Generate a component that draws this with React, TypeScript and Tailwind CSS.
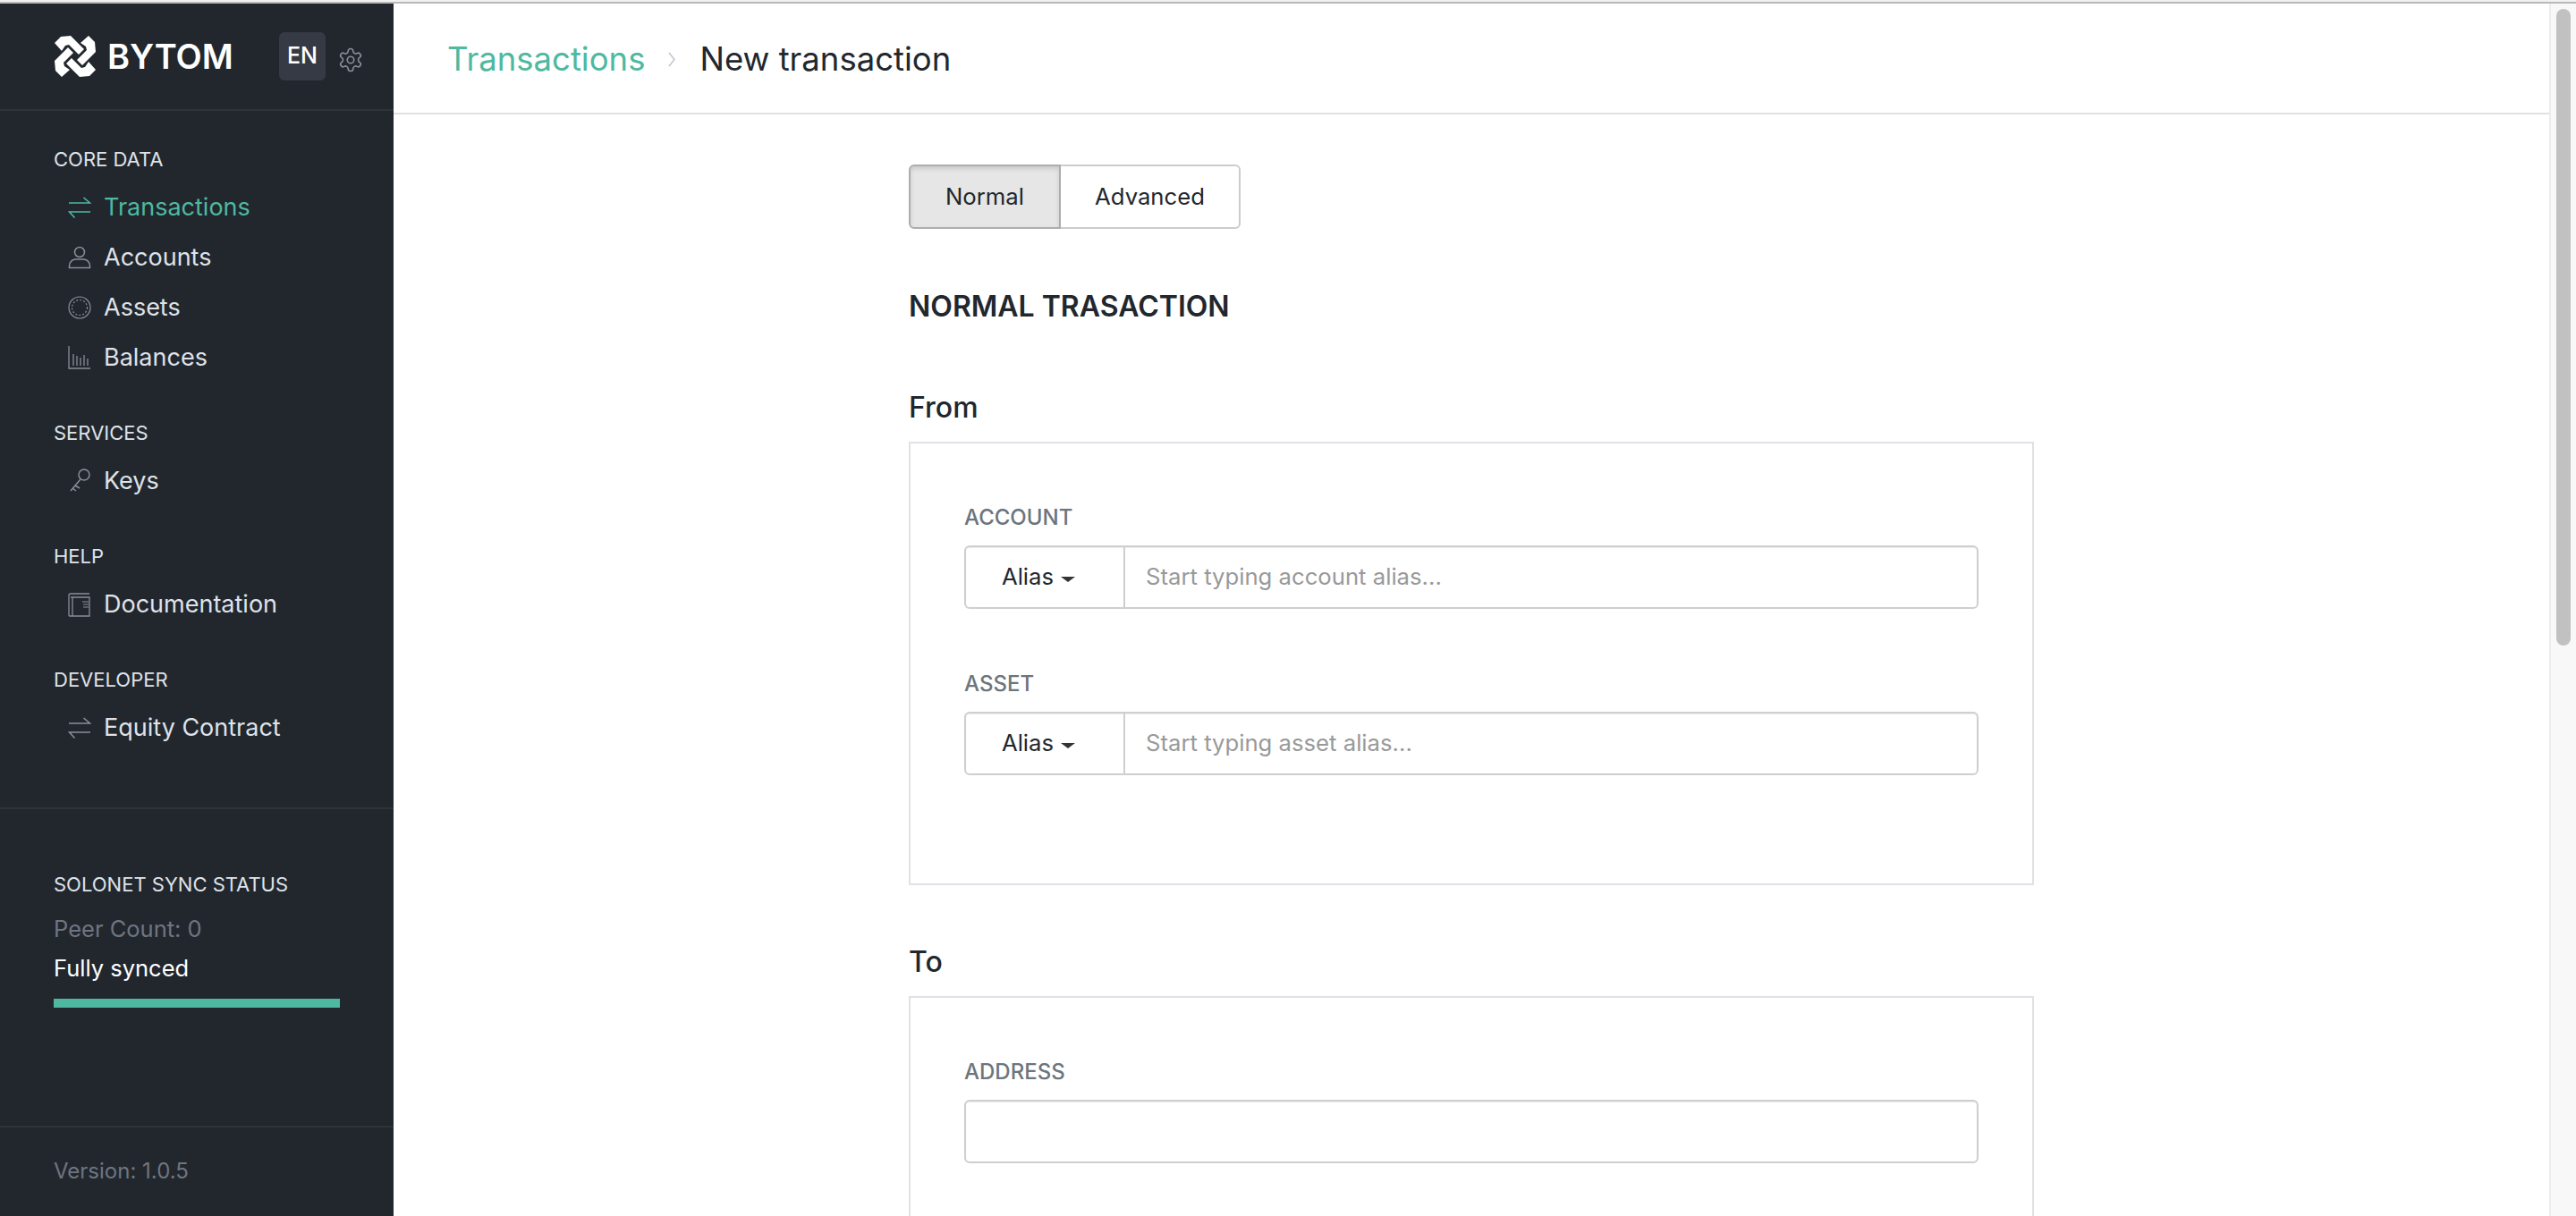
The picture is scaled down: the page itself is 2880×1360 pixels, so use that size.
import type {ReactNode} from "react";

const sansFont = "font-['Inter','Liberation_Sans',sans-serif]";

function TransferIcon() {
  return (
    <svg width="26" height="26" viewBox="0 0 26 26" fill="none" stroke="currentColor" strokeWidth="1.600">
      <path d="M1 8H24.500L17.500 2" />
      <path d="M25 18H1.500L7.500 24.500" />
    </svg>
  );
}

function PersonIcon() {
  return (
    <svg width="26" height="26" viewBox="0 0 26 26" fill="none" stroke="currentColor" strokeWidth="1.500">
      <circle cx="13" cy="7" r="5.500" />
      <path d="M1.500 24.500v-2c0-5 4-7.500 7-7.500h9c3 0 7 2.500 7 7.500v2z" />
    </svg>
  );
}

function CoinIcon() {
  return (
    <svg width="26" height="26" viewBox="0 0 26 26" fill="none" stroke="currentColor" strokeWidth="1.200">
      <circle cx="13" cy="13" r="12" />
      <circle cx="13" cy="13" r="8.500" strokeDasharray="2 2" />
    </svg>
  );
}

function BarsIcon() {
  return (
    <svg width="26" height="26" viewBox="0 0 26 26" fill="none" stroke="currentColor" strokeWidth="1.300">
      <path d="M1 0v25h24" />
      <path d="M6 9v13M10 11v11M14 13v9M18 10v12M22 14v8" />
    </svg>
  );
}

function KeyIcon() {
  return (
    <svg width="26" height="30" viewBox="0 0 26 30" fill="none" stroke="currentColor" strokeWidth="1.500">
      <circle cx="18" cy="8" r="6" />
      <path d="M14 13L3 26M8 20l5 3M5 23l4 3" />
    </svg>
  );
}

function DocIcon() {
  return (
    <svg width="26" height="27" viewBox="0 0 26 27" fill="none" stroke="currentColor" strokeWidth="1.300">
      <path d="M24 1H3a2 2 0 0 0-2 2v22a1 1 0 0 0 1 1h22V5H3" />
      <path d="M16 10h7M17 13h6M17 16h6" strokeWidth="1" />
      <path d="M5 5v21" />
    </svg>
  );
}

function GearIcon() {
  return (
    <svg width="30" height="30" viewBox="0 0 24 24" fill="none" stroke="currentColor" strokeWidth="1.300" strokeLinecap="round" strokeLinejoin="round">
      <path d="M12.220 2h-.44a2 2 0 0 0-2 2v.18a2 2 0 0 1-1 1.730l-.43.25a2 2 0 0 1-2 0l-.15-.08a2 2 0 0 0-2.730.73l-.22.380a2 2 0 0 0 .73 2.730l.15.100a2 2 0 0 1 1 1.720v.510a2 2 0 0 1-1 1.740l-.15.090a2 2 0 0 0-.73 2.730l.22.380a2 2 0 0 0 2.730.730l.15-.080a2 2 0 0 1 2 0l.43.250a2 2 0 0 1 1 1.730V20a2 2 0 0 0 2 2h.44a2 2 0 0 0 2-2v-.18a2 2 0 0 1 1-1.730l.43-.25a2 2 0 0 1 2 0l.15.080a2 2 0 0 0 2.730-.730l.22-.390a2 2 0 0 0-.73-2.730l-.15-.080a2 2 0 0 1-1-1.740v-.500a2 2 0 0 1 1-1.740l.15-.090a2 2 0 0 0 .73-2.730l-.22-.380a2 2 0 0 0-2.730-.730l-.15.080a2 2 0 0 1-2 0l-.43-.250a2 2 0 0 1-1-1.730V4a2 2 0 0 0-2-2z" />
      <circle cx="12" cy="12" r="3" />
    </svg>
  );
}

// pinwheel mark: one arm repeated four times
function BytomMark() {
  const arm = "M1 9 8 2l11-1 15 15-6 6-11-11-4 1-4 6z";
  return (
    <svg width="48" height="48" viewBox="0 0 48 48" fill="#ffffff">
      <path d={arm} />
      <path d={arm} transform="rotate(90 24 24)" />
      <path d={arm} transform="rotate(180 24 24)" />
      <path d={arm} transform="rotate(270 24 24)" />
    </svg>
  );
}

const NAV_GROUPS = [
  {
    title: "Core Data",
    items: [
      {label: "Transactions", icon: <TransferIcon />, active: true},
      {label: "Accounts", icon: <PersonIcon />},
      {label: "Assets", icon: <CoinIcon />},
      {label: "Balances", icon: <BarsIcon />},
    ],
  },
  {title: "Services", items: [{label: "Keys", icon: <KeyIcon />}]},
  {title: "Help", items: [{label: "Documentation", icon: <DocIcon />}]},
  {title: "Developer", items: [{label: "Equity Contract", icon: <TransferIcon />}]},
];

function Sidebar() {
  return (
    <aside className="flex h-full w-[440px] shrink-0 flex-col bg-[#22272e] text-[#dfe2e8]">
      <div className="flex h-[120px] shrink-0 items-center border-b-2 border-[#2e3338] pl-[60px]">
        <BytomMark />
        <span className="ml-[12px] w-[192px] text-[38px] font-semibold leading-none text-white">BYTOM</span>
        <span className="flex h-[54px] w-[52px] items-center justify-center rounded-md bg-[#363a44] text-[25px] font-medium text-white">
          EN
        </span>
        <span className="ml-[13px] mt-[8px] text-[#8a8e98]">
          <GearIcon />
        </span>
      </div>

      <nav className="flex h-[781px] shrink-0 flex-col border-b-2 border-[#2e3338] pl-[60px] pt-[40px]">
        {NAV_GROUPS.map((group) => (
          <div key={group.title} className="mb-[42px]">
            <div className="text-[22px] uppercase leading-[28px]">{group.title}</div>
            <ul className="mt-[12px]">
              {group.items.map((item) => (
                <li
                  key={item.label}
                  className={`flex h-[56px] items-center gap-[14px] pl-[16px] text-[27px] ${
                    item.active ? "text-[#4fb8a0]" : ""
                  }`}
                >
                  <span className={`flex w-[26px] justify-center ${item.active ? "" : "text-[#8a8e98]"}`}>
                    {item.icon}
                  </span>
                  {item.label}
                </li>
              ))}
            </ul>
          </div>
        ))}
      </nav>

      <div className="h-[356px] shrink-0 border-b-2 border-[#2e3338] px-[60px] pt-[70px]">
        <div className="text-[22px] uppercase leading-[28px]">Solonet sync status</div>
        <div className="mt-[20px] text-[25.500px] leading-[32px] text-[#6f7580]">Peer Count: 0</div>
        <div className="mt-[12px] text-[25.500px] leading-[32px] text-white">Fully synced</div>
        <div className="mt-[18px] h-[10px] bg-[#4fb8a0]" />
      </div>

      <div className="pl-[60px] pt-[34px] text-[24px] leading-[30px] text-[#6f7580]">Version: 1.0.5</div>
    </aside>
  );
}

function Field({label, placeholder, hasAlias}: {label: string; placeholder?: string; hasAlias?: boolean}) {
  return (
    <div>
      <div className="text-[24px] font-medium uppercase leading-[28px] text-[#6c757d]">{label}</div>
      <div className="mt-[17px] flex h-[71px] rounded-md border-2 border-[#cfcfcf] text-[25.700px] shadow-[inset_0_1px_1px_rgba(0,0,0,0.075)]">
        {hasAlias ? (
          <div className="flex w-[178px] items-center justify-center gap-[8px] border-r-2 border-[#cfcfcf] pr-[14px] text-[#22272e]">
            Alias
            <span className="mt-[4px] h-0 w-0 border-x-[8px] border-t-[6px] border-x-transparent border-t-[#333333]" />
          </div>
        ) : null}
        {placeholder ? (
          <div className="flex flex-1 items-center pl-[23px] text-[#999999]">{placeholder}</div>
        ) : null}
      </div>
    </div>
  );
}

function FormCard({children}: {children: ReactNode}) {
  return (
    <div className="mt-[18px] flex flex-col gap-[70px] border-2 border-[#dee2e6] px-[60px] pb-[121px] pt-[69px]">
      {children}
    </div>
  );
}

function MainContent() {
  return (
    <main className="flex h-full min-w-0 flex-1 flex-col overflow-hidden text-[#22272e]">
      <div className="flex h-[124px] shrink-0 items-center border-b-2 border-[#dee2e6] pl-[60px] pt-[2px]">
        <div className="flex items-center text-[36.500px]">
          <span className="text-[#4fb8a0]">Transactions</span>
          <svg className="mx-[26px]" width="9" height="17" viewBox="0 0 9 17" fill="none" stroke="#c0c4cf" strokeWidth="1.500">
            <path d="M1 1l6 7.500L1 16" />
          </svg>
          <span>New transaction</span>
        </div>
      </div>

      <div className="ml-[576px] w-[1258px] pt-[56px]">
        <div className="flex h-[72px] w-[371px] text-[25.700px]">
          <div className="flex w-[170px] items-center justify-center rounded-l-md border-2 border-[#adadad] bg-[#e6e6e6] shadow-[inset_0_3px_5px_rgba(0,0,0,0.125)]">
            Normal
          </div>
          <div className="flex flex-1 items-center justify-center rounded-r-md border-2 border-l-0 border-[#cccccc]">
            Advanced
          </div>
        </div>

        <h1 className="mt-[67px] text-[32px] font-semibold uppercase leading-[40px]">Normal trasaction</h1>

        <h2 className="mt-[73px] text-[32px] font-medium leading-[40px]">From</h2>
        <FormCard>
          <Field label="Account" placeholder="Start typing account alias..." hasAlias />
          <Field label="Asset" placeholder="Start typing asset alias..." hasAlias />
        </FormCard>

        <h2 className="mt-[66px] text-[32px] font-medium leading-[40px]">To</h2>
        <FormCard>
          <Field label="Address" placeholder=" " />
        </FormCard>
      </div>
    </main>
  );
}

export default function App() {
  return (
    <div className={`flex h-[1360px] w-[2880px] flex-col overflow-hidden bg-white ${sansFont}`}>
      <div className="h-[4px] shrink-0 border-b-2 border-[#b9b9b9] bg-[#f1f1f1]" />
      <div className="flex min-h-0 flex-1">
        <Sidebar />
        <MainContent />
        <div className="w-[30px] shrink-0 border-l-2 border-[#ececec] bg-[#f8f8f8] pl-[6px] pt-[6px]">
          <div className="h-[712px] w-[16px] rounded-full bg-[#c1c1c1]" />
        </div>
      </div>
    </div>
  );
}
